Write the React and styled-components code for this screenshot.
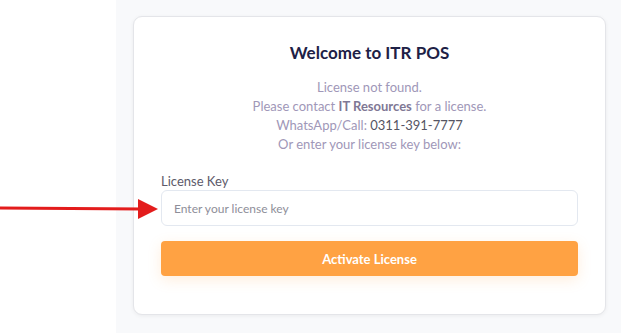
import React from "react";
import styled, { createGlobalStyle } from "styled-components";

const Global = createGlobalStyle`
  html, body { margin: 0; padding: 0; background: #ffffff; }
  body { font-family: Lato, "Noto Sans", sans-serif; }
  * { box-sizing: border-box; }
`;

const Page = styled.div`
  position: relative;
  display: flex;
  width: 621px;
  height: 333px;
  overflow: hidden;
`;

const Side = styled.div`
  width: 116px;
  background: #ffffff;
`;

const Main = styled.div`
  flex: 1;
  background: #f8f9fb;
  padding: 16px 15px 18px 17px;
`;

const Card = styled.div`
  background: #ffffff;
  border: 1px solid #e4e5e9;
  border-radius: 9px;
  box-shadow: 0 1px 4px rgba(0, 0, 0, 0.06);
  height: 100%;
  padding: 24px 27px 0 27px;
  display: flex;
  flex-direction: column;
`;

const Title = styled.h1`
  margin: 0;
  text-align: center;
  font-size: 17px;
  line-height: 24px;
  font-weight: 700;
  color: #1e2146;
`;

const Info = styled.div`
  margin-top: 13px;
  text-align: center;
  font-size: 13px;
  line-height: 19px;
  color: #a097b8;
`;

const Strong = styled.span`
  font-weight: 700;
  color: #7f7895;
`;

const Phone = styled.span`
  color: #555563;
`;

const Label = styled.label`
  display: block;
  margin-top: 18px;
  font-size: 13px;
  line-height: 18px;
  color: #5d5a6a;
`;

const Input = styled.input`
  display: block;
  width: 100%;
  height: 36px;
  margin-top: 0;
  border: 1px solid #e3e8f0;
  border-radius: 6px;
  padding: 0 12px;
  font-family: inherit;
  font-size: 12px;
  color: #333;
  outline: none;
  &::placeholder { color: #8e8e99; }
`;

const Button = styled.button`
  display: block;
  width: 100%;
  height: 35px;
  margin-top: 15px;
  border: none;
  border-radius: 4px;
  background: #ffa243;
  color: #ffffff;
  font-family: inherit;
  font-size: 13px;
  font-weight: 700;
  box-shadow: 0 4px 14px rgba(255, 162, 67, 0.18);
  cursor: pointer;
`;

const Arrow = styled.svg`
  position: absolute;
  left: 0;
  top: 198px;
`;

export default function App() {
  return (
    <>
      <Global />
      <Page>
        <Side />
        <Main>
          <Card>
            <Title>Welcome to ITR POS</Title>
            <Info>
              License not found.
              <br />
              Please contact <Strong>IT Resources</Strong> for a license.
              <br />
              WhatsApp/Call: <Phone>0311-391-7777</Phone>
              <br />
              Or enter your license key below:
            </Info>
            <Label htmlFor="lk">License Key</Label>
            <Input id="lk" placeholder="Enter your license key" />
            <Button>Activate License</Button>
          </Card>
        </Main>
        <Arrow width="160" height="22" viewBox="0 0 160 22">
          <line x1="0" y1="10" x2="142" y2="11" stroke="#e31c1c" strokeWidth="3" />
          <polygon points="138,1 158,11 138,21" fill="#e31c1c" />
        </Arrow>
      </Page>
    </>
  );
}
